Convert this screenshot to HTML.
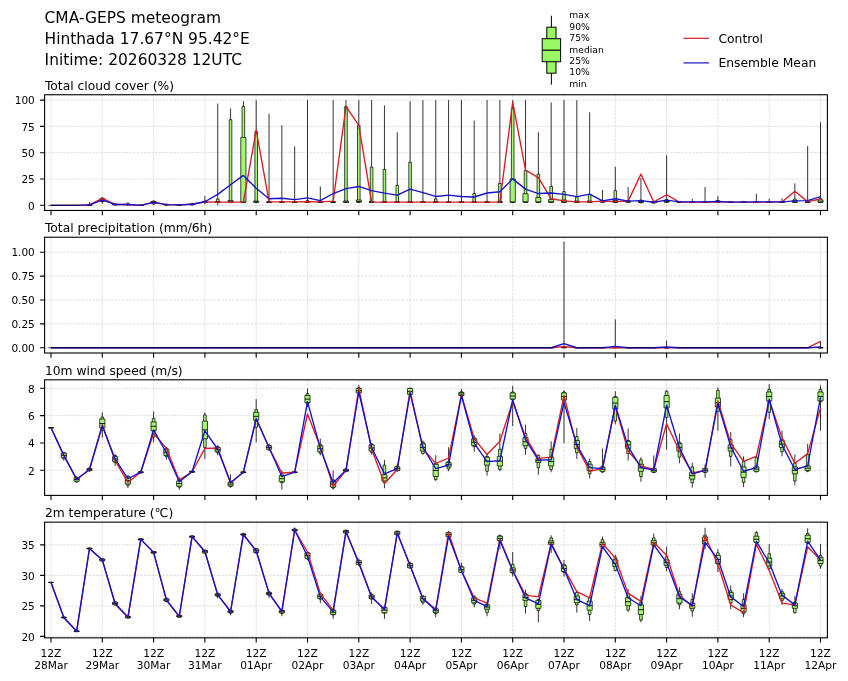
<!DOCTYPE html>
<html lang="en"><head><meta charset="utf-8"><title>CMA-GEPS meteogram</title>
<style>html,body{margin:0;padding:0;background:#fff}svg{display:block;will-change:transform}</style></head>
<body>
<svg width="848" height="681" viewBox="0 0 848 681" font-family="'DejaVu Sans','Liberation Sans',sans-serif" fill="#000">
<rect width="848" height="681" fill="#fff"/>
<text x="44.6" y="22.80" font-size="15.44">CMA-GEPS meteogram</text>
<text x="44.6" y="43.65" font-size="15.44">Hinthada 17.67°N 95.42°E</text>
<text x="44.6" y="64.50" font-size="15.44">Initime: 20260328 12UTC</text>
<line x1="551.4" x2="551.4" y1="15.7" y2="84.7" stroke="#000" stroke-width="1"/>
<rect x="546.8" y="27.2" width="9.2" height="46.0" fill="#99f962" stroke="#000" stroke-width="1"/>
<rect x="542.2" y="38.7" width="18.4" height="23.0" fill="#99f962" stroke="#000" stroke-width="1"/>
<line x1="542.2" x2="560.6" y1="50.2" y2="50.2" stroke="#000" stroke-width="1.2"/>
<text x="569.3" y="18.30" font-size="9.2">max</text>
<text x="569.3" y="29.70" font-size="9.2">90%</text>
<text x="569.3" y="41.10" font-size="9.2">75%</text>
<text x="569.3" y="52.50" font-size="9.2">median</text>
<text x="569.3" y="63.90" font-size="9.2">25%</text>
<text x="569.3" y="75.30" font-size="9.2">10%</text>
<text x="569.3" y="86.70" font-size="9.2">min</text>
<line x1="683.5" x2="709" y1="38.3" y2="38.3" stroke="#d51e28" stroke-width="1.2"/>
<text x="718.5" y="42.5" font-size="12.3">Control</text>
<line x1="683.5" x2="709" y1="62.9" y2="62.9" stroke="#1612cc" stroke-width="1.2"/>
<text x="718.5" y="67" font-size="12.3">Ensemble Mean</text>
<clipPath id="c_cloud"><rect x="44.6" y="94.75" width="782.8" height="115.69999999999999"/></clipPath>
<text x="44.9" y="89.8" font-size="12.3">Total cloud cover (%)</text>
<path d="M51.00 94.75V210.45M102.30 94.75V210.45M153.60 94.75V210.45M204.90 94.75V210.45M256.20 94.75V210.45M307.50 94.75V210.45M358.80 94.75V210.45M410.10 94.75V210.45M461.40 94.75V210.45M512.70 94.75V210.45M564.00 94.75V210.45M615.30 94.75V210.45M666.60 94.75V210.45M717.90 94.75V210.45M769.20 94.75V210.45M820.50 94.75V210.45M44.6 205.30H827.4M44.6 179.00H827.4M44.6 152.70H827.4M44.6 126.40H827.4M44.6 100.10H827.4" stroke="#cdcdcd" stroke-width="0.62" stroke-dasharray="2.57 1.11" fill="none"/>
<g clip-path="url(#c_cloud)">
<path d="M89.47 205.30V202.14M102.30 203.72V197.30M115.12 205.30V203.62M127.95 205.30V202.14M140.77 205.30V204.25M153.60 204.77V200.46M166.43 205.30V203.41M179.25 205.30V204.25M192.07 205.30V202.67M204.90 204.25V196.04M217.72 205.30V103.57M230.55 203.20V108.52M243.38 203.20V101.15M256.20 203.20V100.10M269.02 202.14V113.78M281.85 202.14V125.35M294.67 202.14V146.39M307.50 202.14V100.10M320.32 202.14V186.36M333.15 202.14V100.10M345.97 202.14V100.10M358.80 202.14V100.10M371.62 202.14V100.10M384.45 202.14V105.36M397.27 202.14V132.29M410.10 202.14V101.15M422.92 202.14V100.10M435.75 202.14V100.10M448.57 202.14V100.10M461.40 202.14V100.10M474.22 202.14V120.51M487.05 202.14V100.10M499.88 202.14V100.10M512.70 203.20V100.10M525.52 202.14V100.10M538.35 203.20V132.29M551.17 202.14V102.41M564.00 202.14V100.10M576.82 202.14V100.10M589.65 202.14V112.30M602.48 202.56V189.94M615.30 202.14V166.80M628.12 202.56V187.00M640.95 203.20V177.95M653.77 203.20V201.09M666.60 202.56V155.22M679.42 202.14V201.09M692.25 202.14V198.78M705.07 202.14V187.00M717.90 202.56V196.15M730.72 202.14V201.62M743.55 202.14V200.88M756.38 202.14V194.04M769.20 202.14V198.78M782.02 202.14V198.25M794.85 202.14V183.42M807.67 202.14V146.07M820.50 202.14V122.30" stroke="#000" stroke-width="0.8" fill="none"/>
<path d="M88.17 204.67h2.6V205.30h-2.6ZM101.00 197.94h2.6V201.72h-2.6ZM113.83 204.04h2.6V204.98h-2.6ZM126.65 204.04h2.6V204.98h-2.6ZM139.47 205.19h2.6V205.30h-2.6ZM152.30 201.09h2.6V204.04h-2.6ZM165.12 204.46h2.6V205.09h-2.6ZM177.95 204.67h2.6V205.30h-2.6ZM190.77 203.83h2.6V204.98h-2.6ZM203.60 201.09h2.6V202.67h-2.6ZM216.42 198.99h2.6V202.14h-2.6ZM229.25 119.67h2.6V202.14h-2.6ZM242.07 106.41h2.6V202.14h-2.6ZM254.90 131.66h2.6V202.14h-2.6ZM267.72 201.99h2.6V202.14h-2.6ZM280.55 201.99h2.6V202.14h-2.6ZM293.37 201.99h2.6V202.14h-2.6ZM306.20 200.57h2.6V202.14h-2.6ZM319.02 201.99h2.6V202.14h-2.6ZM331.85 201.99h2.6V202.14h-2.6ZM344.67 106.41h2.6V202.14h-2.6ZM357.50 125.35h2.6V202.14h-2.6ZM370.32 167.11h2.6V202.14h-2.6ZM383.15 169.53h2.6V202.14h-2.6ZM395.97 185.31h2.6V202.14h-2.6ZM408.80 162.38h2.6V202.14h-2.6ZM421.62 201.72h2.6V202.14h-2.6ZM434.45 198.99h2.6V202.14h-2.6ZM447.27 201.99h2.6V202.14h-2.6ZM460.10 201.99h2.6V202.14h-2.6ZM472.92 193.52h2.6V202.14h-2.6ZM485.75 201.99h2.6V202.14h-2.6ZM498.57 183.42h2.6V202.14h-2.6ZM511.40 108.52h2.6V202.14h-2.6ZM524.23 170.58h2.6V202.14h-2.6ZM537.05 174.16h2.6V202.14h-2.6ZM549.88 186.36h2.6V202.14h-2.6ZM562.70 191.62h2.6V202.14h-2.6ZM575.52 196.99h2.6V202.14h-2.6ZM588.35 194.36h2.6V202.14h-2.6ZM601.18 200.36h2.6V202.35h-2.6ZM614.00 190.57h2.6V202.14h-2.6ZM626.83 200.57h2.6V202.35h-2.6ZM639.65 200.04h2.6V202.88h-2.6ZM652.48 201.51h2.6V202.99h-2.6ZM665.30 199.62h2.6V202.35h-2.6ZM678.12 201.99h2.6V202.14h-2.6ZM690.95 201.99h2.6V202.14h-2.6ZM703.77 201.99h2.6V202.14h-2.6ZM716.60 200.46h2.6V202.35h-2.6ZM729.42 201.99h2.6V202.14h-2.6ZM742.25 201.99h2.6V202.14h-2.6ZM755.08 201.99h2.6V202.14h-2.6ZM767.90 201.99h2.6V202.14h-2.6ZM780.73 201.99h2.6V202.14h-2.6ZM793.55 198.99h2.6V202.14h-2.6ZM806.38 201.99h2.6V202.14h-2.6ZM819.20 198.46h2.6V202.14h-2.6Z" stroke="#000" stroke-width="0.72" fill="#a2f970"/>
<path d="M86.88 204.88h5.2V205.30h-5.2ZM99.70 198.78h5.2V201.09h-5.2ZM112.53 204.25h5.2V204.77h-5.2ZM125.35 204.25h5.2V204.77h-5.2ZM138.17 205.30h5.2V205.30h-5.2ZM151.00 201.51h5.2V203.20h-5.2ZM163.83 204.56h5.2V204.88h-5.2ZM176.65 204.77h5.2V205.09h-5.2ZM189.47 204.04h5.2V204.67h-5.2ZM202.30 201.62h5.2V202.14h-5.2ZM215.12 201.83h5.2V202.14h-5.2ZM227.95 200.57h5.2V202.14h-5.2ZM240.78 137.55h5.2V202.14h-5.2ZM253.60 201.09h5.2V202.14h-5.2ZM266.42 202.04h5.2V202.14h-5.2ZM279.25 202.04h5.2V202.14h-5.2ZM292.07 202.04h5.2V202.14h-5.2ZM304.90 201.51h5.2V202.14h-5.2ZM317.72 202.04h5.2V202.14h-5.2ZM330.55 202.04h5.2V202.14h-5.2ZM343.37 201.09h5.2V202.14h-5.2ZM356.20 200.04h5.2V201.62h-5.2ZM369.02 202.04h5.2V202.14h-5.2ZM381.85 202.04h5.2V202.14h-5.2ZM394.67 202.04h5.2V202.14h-5.2ZM407.50 202.04h5.2V202.14h-5.2ZM420.32 202.04h5.2V202.14h-5.2ZM433.15 202.04h5.2V202.14h-5.2ZM445.97 202.04h5.2V202.14h-5.2ZM458.80 202.04h5.2V202.14h-5.2ZM471.62 202.04h5.2V202.14h-5.2ZM484.45 202.04h5.2V202.14h-5.2ZM497.27 202.04h5.2V202.14h-5.2ZM510.10 179.00h5.2V202.14h-5.2ZM522.92 193.73h5.2V201.93h-5.2ZM535.75 197.52h5.2V202.14h-5.2ZM548.57 199.62h5.2V202.14h-5.2ZM561.40 200.04h5.2V202.14h-5.2ZM574.22 201.09h5.2V202.14h-5.2ZM587.05 201.09h5.2V202.14h-5.2ZM599.88 200.78h5.2V202.14h-5.2ZM612.70 200.57h5.2V202.14h-5.2ZM625.52 200.99h5.2V202.14h-5.2ZM638.35 200.67h5.2V202.56h-5.2ZM651.17 201.83h5.2V202.78h-5.2ZM664.00 200.46h5.2V202.14h-5.2ZM676.82 202.04h5.2V202.14h-5.2ZM689.65 202.04h5.2V202.14h-5.2ZM702.47 202.04h5.2V202.14h-5.2ZM715.30 201.09h5.2V202.14h-5.2ZM728.12 202.04h5.2V202.14h-5.2ZM740.95 202.04h5.2V202.14h-5.2ZM753.77 202.04h5.2V202.14h-5.2ZM766.60 202.04h5.2V202.14h-5.2ZM779.42 202.04h5.2V202.14h-5.2ZM792.25 200.57h5.2V202.14h-5.2ZM805.07 202.04h5.2V202.14h-5.2ZM817.90 200.04h5.2V202.14h-5.2Z" stroke="#000" stroke-width="0.72" fill="#a2f970"/>
<path d="M86.88 205.09h5.2M99.70 200.04h5.2M112.53 204.46h5.2M125.35 204.46h5.2M138.17 205.30h5.2M151.00 202.14h5.2M163.83 204.67h5.2M176.65 204.88h5.2M189.47 204.25h5.2M202.30 201.93h5.2M215.12 202.12h5.2M227.95 202.12h5.2M240.78 202.12h5.2M253.60 202.12h5.2M266.42 202.12h5.2M279.25 202.12h5.2M292.07 202.12h5.2M304.90 202.12h5.2M317.72 202.12h5.2M330.55 202.12h5.2M343.37 202.12h5.2M356.20 202.12h5.2M369.02 202.12h5.2M381.85 202.12h5.2M394.67 202.12h5.2M407.50 202.12h5.2M420.32 202.12h5.2M433.15 202.12h5.2M445.97 202.12h5.2M458.80 202.12h5.2M471.62 202.12h5.2M484.45 202.12h5.2M497.27 202.12h5.2M510.10 202.12h5.2M522.92 202.12h5.2M535.75 202.12h5.2M548.57 202.12h5.2M561.40 202.12h5.2M574.22 202.12h5.2M587.05 202.12h5.2M599.88 201.51h5.2M612.70 202.12h5.2M625.52 201.62h5.2M638.35 201.62h5.2M651.17 202.25h5.2M664.00 201.30h5.2M676.82 202.12h5.2M689.65 202.12h5.2M702.47 202.12h5.2M715.30 201.62h5.2M728.12 202.12h5.2M740.95 202.12h5.2M753.77 202.12h5.2M766.60 202.12h5.2M779.42 202.12h5.2M792.25 202.12h5.2M805.07 202.12h5.2M817.90 202.12h5.2" stroke="#000" stroke-width="0.9" fill="none"/>
<polyline points="51.00,205.30 63.83,205.30 76.65,205.30 89.47,204.88 102.30,198.46 115.12,204.46 127.95,204.46 140.77,205.30 153.60,202.14 166.43,204.67 179.25,204.88 192.07,204.25 204.90,201.83 217.72,202.14 230.55,202.14 243.38,202.14 256.20,130.19 269.02,201.72 281.85,201.83 294.67,201.83 307.50,201.62 320.32,201.83 333.15,201.09 345.97,106.41 358.80,125.35 371.62,202.14 384.45,202.14 397.27,202.14 410.10,202.14 422.92,202.14 435.75,202.14 448.57,202.14 461.40,202.14 474.22,202.14 487.05,202.14 499.88,202.14 512.70,102.20 525.52,170.06 538.35,177.63 551.17,198.78 564.00,200.88 576.82,201.93 589.65,201.93 602.48,201.09 615.30,201.62 628.12,201.09 640.95,174.16 653.77,201.93 666.60,194.78 679.42,202.14 692.25,202.14 705.07,202.14 717.90,201.83 730.72,202.14 743.55,202.14 756.38,202.14 769.20,202.14 782.02,201.93 794.85,191.20 807.67,201.62 820.50,198.99" stroke="#d51e28" stroke-width="1.35" fill="none" stroke-linejoin="round"/>
<polyline points="51.00,205.30 63.83,205.30 76.65,205.30 89.47,204.88 102.30,200.04 115.12,204.46 127.95,204.46 140.77,205.30 153.60,202.35 166.43,204.67 179.25,204.88 192.07,204.25 204.90,201.72 217.72,194.36 230.55,184.68 243.38,175.42 256.20,188.15 269.02,198.78 281.85,198.25 294.67,199.62 307.50,197.94 320.32,200.57 333.15,193.52 345.97,188.68 358.80,186.47 371.62,190.57 384.45,193.10 397.27,195.20 410.10,189.10 422.92,192.68 435.75,196.46 448.57,195.20 461.40,196.46 474.22,196.99 487.05,192.99 499.88,191.73 512.70,178.89 525.52,189.10 538.35,193.52 551.17,192.99 564.00,194.36 576.82,196.67 589.65,194.04 602.48,200.88 615.30,198.78 628.12,201.09 640.95,200.57 653.77,202.25 666.60,200.15 679.42,201.83 692.25,201.93 705.07,201.93 717.90,201.41 730.72,202.14 743.55,202.14 756.38,201.93 769.20,201.93 782.02,201.93 794.85,200.88 807.67,200.57 820.50,196.57" stroke="#1612cc" stroke-width="1.35" fill="none" stroke-linejoin="round"/>
<path d="M48.40 205.30H79.25" stroke="#000" stroke-width="0.7" fill="none"/>
</g>
<rect x="44.6" y="94.75" width="782.8" height="115.69999999999999" fill="none" stroke="#000" stroke-width="1.1"/>
<text x="34.8" y="209.50" font-size="10.5" text-anchor="end">0</text>
<text x="34.8" y="183.20" font-size="10.5" text-anchor="end">25</text>
<text x="34.8" y="156.90" font-size="10.5" text-anchor="end">50</text>
<text x="34.8" y="130.60" font-size="10.5" text-anchor="end">75</text>
<text x="34.8" y="104.30" font-size="10.5" text-anchor="end">100</text>
<path d="M51.00 210.45v4.7M102.30 210.45v4.7M153.60 210.45v4.7M204.90 210.45v4.7M256.20 210.45v4.7M307.50 210.45v4.7M358.80 210.45v4.7M410.10 210.45v4.7M461.40 210.45v4.7M512.70 210.45v4.7M564.00 210.45v4.7M615.30 210.45v4.7M666.60 210.45v4.7M717.90 210.45v4.7M769.20 210.45v4.7M820.50 210.45v4.7M44.6 205.30h-4.5M44.6 179.00h-4.5M44.6 152.70h-4.5M44.6 126.40h-4.5M44.6 100.10h-4.5" stroke="#000" stroke-width="1.1" fill="none"/>
<clipPath id="c_precip"><rect x="44.6" y="237.22" width="782.8" height="115.78"/></clipPath>
<text x="44.9" y="232.2" font-size="12.3">Total precipitation (mm/6h)</text>
<path d="M51.00 237.22V353.0M102.30 237.22V353.0M153.60 237.22V353.0M204.90 237.22V353.0M256.20 237.22V353.0M307.50 237.22V353.0M358.80 237.22V353.0M410.10 237.22V353.0M461.40 237.22V353.0M512.70 237.22V353.0M564.00 237.22V353.0M615.30 237.22V353.0M666.60 237.22V353.0M717.90 237.22V353.0M769.20 237.22V353.0M820.50 237.22V353.0M44.6 347.76H827.4M44.6 323.87H827.4M44.6 299.98H827.4M44.6 276.09H827.4M44.6 252.20H827.4" stroke="#cdcdcd" stroke-width="0.62" stroke-dasharray="2.57 1.11" fill="none"/>
<g clip-path="url(#c_precip)">
<path d="M564.00 347.76V241.69M615.30 347.76V319.38M666.60 347.76V340.59M820.50 347.76V341.36" stroke="#000" stroke-width="0.8" fill="none"/>
<path d="M562.70 346.61h2.6V347.76h-2.6ZM614.00 346.61h2.6V347.76h-2.6ZM665.30 347.76h2.6V347.76h-2.6ZM819.20 347.57h2.6V347.76h-2.6Z" stroke="#000" stroke-width="0.72" fill="#a2f970"/>
<path d="M561.40 347.00h5.2V347.76h-5.2ZM612.70 347.09h5.2V347.76h-5.2ZM664.00 347.76h5.2V347.76h-5.2ZM817.90 347.76h5.2V347.76h-5.2Z" stroke="#000" stroke-width="0.72" fill="#a2f970"/>
<path d="M561.40 347.38h5.2M612.70 347.47h5.2M664.00 347.76h5.2M817.90 347.76h5.2" stroke="#000" stroke-width="0.9" fill="none"/>
<polyline points="51.00,347.76 63.83,347.76 76.65,347.76 89.47,347.76 102.30,347.76 115.12,347.76 127.95,347.76 140.77,347.76 153.60,347.76 166.43,347.76 179.25,347.76 192.07,347.76 204.90,347.76 217.72,347.76 230.55,347.76 243.38,347.76 256.20,347.76 269.02,347.76 281.85,347.76 294.67,347.76 307.50,347.76 320.32,347.76 333.15,347.76 345.97,347.76 358.80,347.76 371.62,347.76 384.45,347.76 397.27,347.76 410.10,347.76 422.92,347.76 435.75,347.76 448.57,347.76 461.40,347.76 474.22,347.76 487.05,347.76 499.88,347.76 512.70,347.76 525.52,347.76 538.35,347.76 551.17,347.76 564.00,346.61 576.82,347.76 589.65,347.76 602.48,347.76 615.30,347.76 628.12,347.76 640.95,347.76 653.77,347.76 666.60,347.76 679.42,347.76 692.25,347.76 705.07,347.76 717.90,347.76 730.72,347.76 743.55,347.76 756.38,347.76 769.20,347.76 782.02,347.76 794.85,347.76 807.67,347.76 820.50,341.36" stroke="#d51e28" stroke-width="1.35" fill="none" stroke-linejoin="round"/>
<polyline points="51.00,347.76 63.83,347.76 76.65,347.76 89.47,347.76 102.30,347.76 115.12,347.76 127.95,347.76 140.77,347.76 153.60,347.76 166.43,347.76 179.25,347.76 192.07,347.76 204.90,347.76 217.72,347.76 230.55,347.76 243.38,347.76 256.20,347.76 269.02,347.76 281.85,347.76 294.67,347.76 307.50,347.76 320.32,347.76 333.15,347.76 345.97,347.76 358.80,347.76 371.62,347.76 384.45,347.76 397.27,347.76 410.10,347.76 422.92,347.76 435.75,347.76 448.57,347.76 461.40,347.76 474.22,347.76 487.05,347.76 499.88,347.76 512.70,347.76 525.52,347.76 538.35,347.76 551.17,347.76 564.00,343.65 576.82,347.76 589.65,347.76 602.48,347.76 615.30,346.33 628.12,347.76 640.95,347.76 653.77,347.76 666.60,347.00 679.42,347.76 692.25,347.76 705.07,347.76 717.90,347.76 730.72,347.76 743.55,347.76 756.38,347.76 769.20,347.76 782.02,347.76 794.85,347.76 807.67,347.76 820.50,347.00" stroke="#1612cc" stroke-width="1.35" fill="none" stroke-linejoin="round"/>
<path d="M48.40 347.76H553.77M574.22 347.76H605.08M625.52 347.76H656.38M676.82 347.76H810.27" stroke="#000" stroke-width="0.7" fill="none"/>
</g>
<rect x="44.6" y="237.22" width="782.8" height="115.78" fill="none" stroke="#000" stroke-width="1.1"/>
<text x="34.8" y="351.96" font-size="10.5" text-anchor="end">0.00</text>
<text x="34.8" y="328.07" font-size="10.5" text-anchor="end">0.25</text>
<text x="34.8" y="304.18" font-size="10.5" text-anchor="end">0.50</text>
<text x="34.8" y="280.29" font-size="10.5" text-anchor="end">0.75</text>
<text x="34.8" y="256.40" font-size="10.5" text-anchor="end">1.00</text>
<path d="M51.00 353.0v4.7M102.30 353.0v4.7M153.60 353.0v4.7M204.90 353.0v4.7M256.20 353.0v4.7M307.50 353.0v4.7M358.80 353.0v4.7M410.10 353.0v4.7M461.40 353.0v4.7M512.70 353.0v4.7M564.00 353.0v4.7M615.30 353.0v4.7M666.60 353.0v4.7M717.90 353.0v4.7M769.20 353.0v4.7M820.50 353.0v4.7M44.6 347.76h-4.5M44.6 323.87h-4.5M44.6 299.98h-4.5M44.6 276.09h-4.5M44.6 252.20h-4.5" stroke="#000" stroke-width="1.1" fill="none"/>
<clipPath id="c_wind"><rect x="44.6" y="379.8" width="782.8" height="115.58999999999997"/></clipPath>
<text x="44.9" y="374.8" font-size="12.3">10m wind speed (m/s)</text>
<path d="M51.00 379.8V495.39M102.30 379.8V495.39M153.60 379.8V495.39M204.90 379.8V495.39M256.20 379.8V495.39M307.50 379.8V495.39M358.80 379.8V495.39M410.10 379.8V495.39M461.40 379.8V495.39M512.70 379.8V495.39M564.00 379.8V495.39M615.30 379.8V495.39M666.60 379.8V495.39M717.90 379.8V495.39M769.20 379.8V495.39M820.50 379.8V495.39M44.6 470.30H827.4M44.6 442.97H827.4M44.6 415.63H827.4M44.6 388.30H827.4" stroke="#cdcdcd" stroke-width="0.62" stroke-dasharray="2.57 1.11" fill="none"/>
<g clip-path="url(#c_wind)">
<path d="M51.00 427.80V427.80M63.83 460.73V451.85M76.65 482.60V476.45M89.47 471.67V466.88M102.30 437.77V412.35M115.12 465.93V454.17M127.95 488.07V475.49M140.77 473.72V470.57M153.60 442.28V411.53M166.43 459.78V446.66M179.25 489.71V477.41M192.07 473.03V470.30M204.90 458.96V412.35M217.72 455.40V444.88M230.55 487.66V474.26M243.38 473.31V470.98M256.20 442.28V399.10M269.02 451.17V443.65M281.85 489.71V470.30M294.67 473.31V470.98M307.50 407.02V388.57M320.32 455.40V438.73M333.15 489.71V470.30M345.97 472.35V468.25M358.80 393.77V385.02M371.62 454.58V443.10M384.45 488.34V459.78M397.27 471.67V463.47M410.10 395.13V387.62M422.92 454.58V440.51M435.75 480.96V455.13M448.57 471.26V447.20M461.40 396.09V389.12M474.22 451.85V435.18M487.05 475.63V452.81M499.88 471.26V433.40M512.70 426.02V385.84M525.52 454.58V424.65M538.35 474.81V454.58M551.17 472.21V441.33M564.00 443.10V390.21M576.82 458.96V428.07M589.65 478.36V458.41M602.48 473.03V448.43M615.30 424.24V391.17M628.12 460.73V428.48M640.95 481.78V457.18M653.77 473.03V455.40M666.60 449.66V390.21M679.42 463.33V433.40M692.25 487.66V462.78M705.07 477.82V464.56M717.90 430.80V387.34M730.72 466.47V432.03M743.55 487.11V456.36M756.38 472.21V455.95M769.20 419.32V384.20M782.02 456.36V430.80M794.85 485.33V454.58M807.67 472.21V443.92M820.50 430.80V385.57" stroke="#000" stroke-width="0.8" fill="none"/>
<path d="M49.70 427.80h2.6V427.80h-2.6ZM62.53 452.53h2.6V458.68h-2.6ZM75.35 477.13h2.6V482.05h-2.6ZM88.17 467.98h2.6V470.98h-2.6ZM101.00 417.00h2.6V429.98h-2.6ZM113.83 455.54h2.6V462.65h-2.6ZM126.65 476.04h2.6V485.33h-2.6ZM139.47 471.39h2.6V473.03h-2.6ZM152.30 418.37h2.6V436.95h-2.6ZM165.12 448.16h2.6V456.63h-2.6ZM177.95 479.18h2.6V487.11h-2.6ZM190.77 471.12h2.6V472.49h-2.6ZM203.60 414.95h2.6V447.48h-2.6ZM216.42 446.66h2.6V452.81h-2.6ZM229.25 481.23h2.6V486.70h-2.6ZM242.07 471.67h2.6V472.76h-2.6ZM254.90 409.62h2.6V427.25h-2.6ZM267.72 445.02h2.6V449.80h-2.6ZM280.55 473.85h2.6V482.60h-2.6ZM293.37 471.67h2.6V472.76h-2.6ZM306.20 393.77h2.6V403.61h-2.6ZM319.02 444.33h2.6V453.22h-2.6ZM331.85 479.87h2.6V488.07h-2.6ZM344.67 468.93h2.6V471.67h-2.6ZM357.50 387.62h2.6V393.36h-2.6ZM370.32 444.06h2.6V452.26h-2.6ZM383.15 465.11h2.6V482.74h-2.6ZM395.97 466.20h2.6V470.85h-2.6ZM408.80 388.30h2.6V394.72h-2.6ZM421.62 442.28h2.6V453.63h-2.6ZM434.45 463.33h2.6V479.59h-2.6ZM447.27 461.55h2.6V468.93h-2.6ZM460.10 391.72h2.6V395.82h-2.6ZM472.92 437.77h2.6V446.66h-2.6ZM485.75 456.36h2.6V471.26h-2.6ZM498.57 449.25h2.6V469.48h-2.6ZM511.40 391.99h2.6V399.92h-2.6ZM524.23 433.40h2.6V448.43h-2.6ZM537.05 455.40h2.6V467.70h-2.6ZM549.88 449.25h2.6V469.48h-2.6ZM562.70 391.99h2.6V400.87h-2.6ZM575.52 436.54h2.6V452.81h-2.6ZM588.35 461.55h2.6V473.85h-2.6ZM601.18 466.20h2.6V472.08h-2.6ZM614.00 396.50h2.6V421.10h-2.6ZM626.83 440.51h2.6V453.63h-2.6ZM639.65 459.78h2.6V476.59h-2.6ZM652.48 467.98h2.6V472.49h-2.6ZM665.30 391.17h2.6V417.55h-2.6ZM678.12 442.28h2.6V457.18h-2.6ZM690.95 466.88h2.6V482.74h-2.6ZM703.77 468.11h2.6V472.49h-2.6ZM716.60 390.35h2.6V411.40h-2.6ZM729.42 439.55h2.6V456.36h-2.6ZM742.25 461.55h2.6V482.33h-2.6ZM755.08 457.18h2.6V471.94h-2.6ZM767.90 389.39h2.6V412.35h-2.6ZM780.73 439.55h2.6V451.85h-2.6ZM793.55 463.33h2.6V480.96h-2.6ZM806.38 454.58h2.6V471.26h-2.6ZM819.20 389.39h2.6V401.69h-2.6Z" stroke="#000" stroke-width="0.72" fill="#a2f970"/>
<path d="M48.40 427.80h5.2V427.80h-5.2ZM61.23 453.08h5.2V457.73h-5.2ZM74.05 477.68h5.2V481.23h-5.2ZM86.88 468.66h5.2V470.30h-5.2ZM99.70 419.05h5.2V427.93h-5.2ZM112.53 456.63h5.2V461.28h-5.2ZM125.35 477.13h5.2V483.97h-5.2ZM138.17 471.80h5.2V472.62h-5.2ZM151.00 421.92h5.2V430.67h-5.2ZM163.83 449.25h5.2V455.40h-5.2ZM176.65 480.96h5.2V486.29h-5.2ZM189.47 471.39h5.2V472.21h-5.2ZM202.30 421.10h5.2V438.73h-5.2ZM215.12 447.48h5.2V451.85h-5.2ZM227.95 482.33h5.2V485.88h-5.2ZM240.78 471.94h5.2V472.49h-5.2ZM253.60 412.35h5.2V420.28h-5.2ZM266.42 445.70h5.2V449.25h-5.2ZM279.25 475.63h5.2V481.78h-5.2ZM292.07 471.94h5.2V472.49h-5.2ZM304.90 395.54h5.2V402.65h-5.2ZM317.72 445.70h5.2V451.85h-5.2ZM330.55 480.96h5.2V487.11h-5.2ZM343.37 469.34h5.2V471.26h-5.2ZM356.20 388.57h5.2V392.95h-5.2ZM369.02 444.88h5.2V451.03h-5.2ZM381.85 474.81h5.2V480.96h-5.2ZM394.67 466.88h5.2V470.44h-5.2ZM407.50 388.57h5.2V394.31h-5.2ZM420.32 443.92h5.2V451.03h-5.2ZM433.15 464.29h5.2V476.59h-5.2ZM445.97 462.51h5.2V466.88h-5.2ZM458.80 392.54h5.2V395.54h-5.2ZM471.62 438.73h5.2V445.70h-5.2ZM484.45 457.18h5.2V465.11h-5.2ZM497.27 456.36h5.2V465.93h-5.2ZM510.10 392.95h5.2V399.10h-5.2ZM522.92 437.77h5.2V445.70h-5.2ZM535.75 458.96h5.2V462.51h-5.2ZM548.57 457.18h5.2V465.93h-5.2ZM561.40 392.95h5.2V399.92h-5.2ZM574.22 440.51h5.2V448.43h-5.2ZM587.05 464.29h5.2V470.44h-5.2ZM599.88 467.16h5.2V471.26h-5.2ZM612.70 397.32h5.2V408.80h-5.2ZM625.52 441.33h5.2V448.43h-5.2ZM638.35 464.29h5.2V471.26h-5.2ZM651.17 468.66h5.2V471.94h-5.2ZM664.00 395.54h5.2V407.84h-5.2ZM676.82 443.65h5.2V451.03h-5.2ZM689.65 472.21h5.2V479.18h-5.2ZM702.47 468.66h5.2V471.94h-5.2ZM715.30 398.14h5.2V407.02h-5.2ZM728.12 444.88h5.2V451.03h-5.2ZM740.95 466.88h5.2V477.41h-5.2ZM753.77 466.88h5.2V471.26h-5.2ZM766.60 391.99h5.2V400.87h-5.2ZM779.42 440.78h5.2V447.48h-5.2ZM792.25 466.88h5.2V473.85h-5.2ZM805.07 465.93h5.2V470.44h-5.2ZM817.90 391.99h5.2V400.87h-5.2Z" stroke="#000" stroke-width="0.72" fill="#a2f970"/>
<path d="M48.40 427.80h5.2M61.23 455.40h5.2M74.05 479.46h5.2M86.88 469.48h5.2M99.70 423.49h5.2M112.53 458.96h5.2M125.35 480.55h5.2M138.17 472.21h5.2M151.00 426.29h5.2M163.83 452.33h5.2M176.65 483.62h5.2M189.47 471.80h5.2M202.30 429.92h5.2M215.12 449.66h5.2M227.95 484.10h5.2M240.78 472.21h5.2M253.60 416.32h5.2M266.42 447.48h5.2M279.25 478.70h5.2M292.07 472.21h5.2M304.90 399.10h5.2M317.72 448.78h5.2M330.55 484.04h5.2M343.37 470.30h5.2M356.20 390.76h5.2M369.02 447.96h5.2M381.85 477.88h5.2M394.67 468.66h5.2M407.50 391.44h5.2M420.32 447.48h5.2M433.15 470.44h5.2M445.97 464.70h5.2M458.80 394.04h5.2M471.62 442.22h5.2M484.45 461.14h5.2M497.27 461.14h5.2M510.10 396.02h5.2M522.92 441.74h5.2M535.75 460.73h5.2M548.57 461.55h5.2M561.40 396.43h5.2M574.22 444.47h5.2M587.05 467.36h5.2M599.88 469.21h5.2M612.70 403.06h5.2M625.52 444.88h5.2M638.35 467.77h5.2M651.17 470.30h5.2M664.00 401.69h5.2M676.82 447.34h5.2M689.65 475.70h5.2M702.47 470.30h5.2M715.30 402.58h5.2M728.12 447.96h5.2M740.95 472.15h5.2M753.77 469.07h5.2M766.60 396.43h5.2M779.42 444.13h5.2M792.25 470.37h5.2M805.07 468.18h5.2M817.90 396.43h5.2" stroke="#000" stroke-width="0.9" fill="none"/>
<polyline points="51.00,427.80 63.83,455.40 76.65,479.46 89.47,469.48 102.30,424.65 115.12,460.73 127.95,482.33 140.77,472.21 153.60,433.40 166.43,448.43 179.25,480.14 192.07,471.80 204.90,448.43 217.72,448.02 230.55,482.74 243.38,472.21 256.20,419.32 269.02,447.48 281.85,473.03 294.67,472.21 307.50,413.99 320.32,446.66 333.15,486.29 345.97,470.30 358.80,388.57 371.62,449.25 384.45,483.56 397.27,469.48 410.10,391.17 422.92,448.43 435.75,463.33 448.57,458.00 461.40,394.72 474.22,438.73 487.05,454.58 499.88,441.33 512.70,401.69 525.52,436.95 538.35,458.41 551.17,457.18 564.00,395.54 576.82,446.66 589.65,471.26 602.48,468.66 615.30,406.07 628.12,451.03 640.95,465.93 653.77,469.48 666.60,423.70 679.42,451.03 692.25,473.03 705.07,470.30 717.90,400.87 730.72,443.10 743.55,461.28 756.38,456.36 769.20,399.92 782.02,437.77 794.85,463.33 807.67,453.63 820.50,407.84" stroke="#d51e28" stroke-width="1.35" fill="none" stroke-linejoin="round"/>
<polyline points="51.00,427.80 63.83,455.40 76.65,479.18 89.47,469.48 102.30,426.02 115.12,458.96 127.95,478.77 140.77,472.21 153.60,429.85 166.43,452.81 179.25,481.78 192.07,471.80 204.90,430.80 217.72,449.25 230.55,482.74 243.38,472.21 256.20,418.50 269.02,447.48 281.85,476.59 294.67,472.21 307.50,401.69 320.32,448.43 333.15,482.74 345.97,470.30 358.80,391.99 371.62,447.48 384.45,473.85 397.27,468.66 410.10,392.95 422.92,447.48 435.75,468.66 448.57,465.11 461.40,395.54 474.22,443.10 487.05,461.55 499.88,460.73 512.70,399.92 525.52,439.55 538.35,460.19 551.17,459.78 564.00,402.65 576.82,444.88 589.65,467.70 602.48,468.66 615.30,405.25 628.12,446.66 640.95,467.70 653.77,470.03 666.60,405.25 679.42,447.48 692.25,473.85 705.07,470.30 717.90,403.47 730.72,446.66 743.55,471.26 756.38,467.70 769.20,399.10 782.02,444.88 794.85,469.48 807.67,465.93 820.50,397.32" stroke="#1612cc" stroke-width="1.35" fill="none" stroke-linejoin="round"/>
</g>
<rect x="44.6" y="379.8" width="782.8" height="115.58999999999997" fill="none" stroke="#000" stroke-width="1.1"/>
<text x="34.8" y="474.50" font-size="10.5" text-anchor="end">2</text>
<text x="34.8" y="447.17" font-size="10.5" text-anchor="end">4</text>
<text x="34.8" y="419.83" font-size="10.5" text-anchor="end">6</text>
<text x="34.8" y="392.50" font-size="10.5" text-anchor="end">8</text>
<path d="M51.00 495.39v4.7M102.30 495.39v4.7M153.60 495.39v4.7M204.90 495.39v4.7M256.20 495.39v4.7M307.50 495.39v4.7M358.80 495.39v4.7M410.10 495.39v4.7M461.40 495.39v4.7M512.70 495.39v4.7M564.00 495.39v4.7M615.30 495.39v4.7M666.60 495.39v4.7M717.90 495.39v4.7M769.20 495.39v4.7M820.50 495.39v4.7M44.6 470.30h-4.5M44.6 442.97h-4.5M44.6 415.63h-4.5M44.6 388.30h-4.5" stroke="#000" stroke-width="1.1" fill="none"/>
<clipPath id="c_temp"><rect x="44.6" y="522.16" width="782.8" height="115.70000000000005"/></clipPath>
<text x="44.9" y="517.2" font-size="12.3">2m temperature (℃)</text>
<path d="M51.00 522.16V637.86M102.30 522.16V637.86M153.60 522.16V637.86M204.90 522.16V637.86M256.20 522.16V637.86M307.50 522.16V637.86M358.80 522.16V637.86M410.10 522.16V637.86M461.40 522.16V637.86M512.70 522.16V637.86M564.00 522.16V637.86M615.30 522.16V637.86M666.60 522.16V637.86M717.90 522.16V637.86M769.20 522.16V637.86M820.50 522.16V637.86M44.6 636.40H827.4M44.6 605.88H827.4M44.6 575.37H827.4M44.6 544.85H827.4" stroke="#cdcdcd" stroke-width="0.62" stroke-dasharray="2.57 1.11" fill="none"/>
<g clip-path="url(#c_temp)">
<path d="M51.00 582.45V582.45M63.83 618.07V616.89M76.65 631.80V630.63M89.47 549.10V547.93M102.30 561.39V558.46M115.12 605.27V601.31M127.95 618.29V615.94M140.77 540.14V538.58M153.60 553.53V551.19M166.43 602.22V597.34M179.25 617.43V615.09M192.07 537.65V535.70M204.90 553.64V549.73M217.72 598.56V592.46M230.55 615.34V609.24M243.38 536.31V532.64M256.20 554.00V547.90M269.02 597.95V590.62M281.85 616.26V608.93M294.67 532.03V527.46M307.50 560.11V551.26M320.32 603.14V592.46M333.15 618.88V608.32M345.97 533.56V529.59M358.80 566.21V558.28M371.62 604.05V592.46M384.45 618.88V605.70M397.27 535.39V530.81M410.10 568.65V561.63M422.92 604.85V595.14M435.75 617.17V607.41M448.57 537.22V530.81M461.40 573.11V562.55M474.22 607.41V595.14M487.05 616.26V603.08M499.88 549.37V534.47M512.70 576.59V551.99M525.52 613.63V589.83M538.35 622.36V598.68M551.17 552.91V535.27M564.00 576.59V559.93M576.82 612.72V590.75M589.65 621.02V596.00M602.48 548.51V536.55M615.30 571.40V554.62M628.12 611.86V588.98M640.95 622.36V596.00M653.77 546.74V533.50M666.60 571.40V546.74M679.42 609.24V587.21M692.25 616.81V593.37M705.07 549.37V527.76M717.90 572.32V549.37M730.72 609.24V585.44M743.55 617.11V593.37M756.38 543.20V530.87M769.20 569.63V544.12M782.02 604.85V588.98M794.85 613.63V596.00M807.67 544.12V528.25M820.50 568.71V544.12" stroke="#000" stroke-width="0.8" fill="none"/>
<path d="M49.70 582.45h2.6V582.45h-2.6ZM62.53 617.00h2.6V617.96h-2.6ZM75.35 630.74h2.6V631.69h-2.6ZM88.17 548.04h2.6V548.99h-2.6ZM101.00 558.74h2.6V561.12h-2.6ZM113.83 601.92h2.6V604.97h-2.6ZM126.65 616.16h2.6V618.07h-2.6ZM139.47 538.72h2.6V539.99h-2.6ZM152.30 551.40h2.6V553.31h-2.6ZM165.12 598.25h2.6V601.61h-2.6ZM177.95 615.31h2.6V617.21h-2.6ZM190.77 535.88h2.6V537.46h-2.6ZM203.60 550.10h2.6V553.27h-2.6ZM216.42 593.37h2.6V596.42h-2.6ZM229.25 610.16h2.6V613.21h-2.6ZM242.07 533.68h2.6V535.27h-2.6ZM254.90 548.51h2.6V553.09h-2.6ZM267.72 591.85h2.6V595.20h-2.6ZM280.55 609.85h2.6V613.51h-2.6ZM293.37 528.98h2.6V531.12h-2.6ZM306.20 552.48h2.6V558.89h-2.6ZM319.02 593.98h2.6V599.17h-2.6ZM331.85 609.55h2.6V615.04h-2.6ZM344.67 530.20h2.6V533.25h-2.6ZM357.50 560.41h2.6V564.69h-2.6ZM370.32 594.59h2.6V599.17h-2.6ZM383.15 607.10h2.6V613.21h-2.6ZM395.97 531.12h2.6V535.08h-2.6ZM408.80 563.16h2.6V568.04h-2.6ZM421.62 596.00h2.6V602.71h-2.6ZM434.45 608.32h2.6V613.51h-2.6ZM447.27 532.34h2.6V536.92h-2.6ZM460.10 566.21h2.6V572.62h-2.6ZM472.92 596.73h2.6V604.05h-2.6ZM485.75 604.05h2.6V612.72h-2.6ZM498.57 535.70h2.6V541.19h-2.6ZM511.40 564.38h2.6V573.11h-2.6ZM524.23 593.37h2.6V606.55h-2.6ZM537.05 599.54h2.6V610.46h-2.6ZM549.88 537.95h2.6V544.97h-2.6ZM562.70 564.38h2.6V572.32h-2.6ZM575.52 592.46h2.6V604.85h-2.6ZM588.35 597.77h2.6V614.49h-2.6ZM601.18 539.66h2.6V547.60h-2.6ZM614.00 557.30h2.6V570.48h-2.6ZM626.83 593.37h2.6V610.09h-2.6ZM639.65 602.22h2.6V620.10h-2.6ZM652.48 537.95h2.6V545.83h-2.6ZM665.30 556.45h2.6V567.49h-2.6ZM678.12 591.60h2.6V604.85h-2.6ZM690.95 599.54h2.6V611.01h-2.6ZM703.77 535.08h2.6V544.85h-2.6ZM716.60 552.91h2.6V564.38h-2.6ZM729.42 590.75h2.6V603.08h-2.6ZM742.25 599.54h2.6V613.63h-2.6ZM755.08 532.64h2.6V542.84h-2.6ZM767.90 553.76h2.6V568.71h-2.6ZM780.73 591.60h2.6V600.39h-2.6ZM793.55 602.22h2.6V612.72h-2.6ZM806.38 533.50h2.6V543.20h-2.6ZM819.20 555.53h2.6V566.09h-2.6Z" stroke="#000" stroke-width="0.72" fill="#a2f970"/>
<path d="M48.40 582.45h5.2V582.45h-5.2ZM61.23 617.11h5.2V617.85h-5.2ZM74.05 630.85h5.2V631.58h-5.2ZM86.88 548.15h5.2V548.88h-5.2ZM99.70 559.01h5.2V560.84h-5.2ZM112.53 602.22h5.2V604.66h-5.2ZM125.35 616.38h5.2V617.85h-5.2ZM138.17 538.87h5.2V539.85h-5.2ZM151.00 551.62h5.2V553.09h-5.2ZM163.83 598.86h5.2V601.00h-5.2ZM176.65 615.53h5.2V616.99h-5.2ZM189.47 536.06h5.2V537.28h-5.2ZM202.30 550.47h5.2V552.91h-5.2ZM215.12 593.80h5.2V595.81h-5.2ZM227.95 610.64h5.2V612.60h-5.2ZM240.78 533.86h5.2V535.08h-5.2ZM253.60 549.12h5.2V552.48h-5.2ZM266.42 592.46h5.2V594.59h-5.2ZM279.25 610.46h5.2V612.90h-5.2ZM292.07 529.29h5.2V530.81h-5.2ZM304.90 552.91h5.2V558.28h-5.2ZM317.72 594.29h5.2V598.56h-5.2ZM330.55 610.16h5.2V614.43h-5.2ZM343.37 530.51h5.2V532.95h-5.2ZM356.20 560.72h5.2V564.38h-5.2ZM369.02 595.14h5.2V598.56h-5.2ZM381.85 607.47h5.2V612.72h-5.2ZM394.67 531.42h5.2V534.78h-5.2ZM407.50 563.47h5.2V567.74h-5.2ZM420.32 596.42h5.2V601.00h-5.2ZM433.15 608.93h5.2V612.72h-5.2ZM445.97 532.64h5.2V536.55h-5.2ZM458.80 566.94h5.2V572.32h-5.2ZM471.62 597.77h5.2V602.83h-5.2ZM484.45 604.85h5.2V609.24h-5.2ZM497.27 536.18h5.2V540.58h-5.2ZM510.10 567.86h5.2V572.32h-5.2ZM522.92 594.59h5.2V600.39h-5.2ZM535.75 600.39h5.2V608.32h-5.2ZM548.57 540.94h5.2V544.61h-5.2ZM561.40 565.72h5.2V571.40h-5.2ZM574.22 596.00h5.2V602.71h-5.2ZM587.05 601.31h5.2V610.16h-5.2ZM599.88 542.35h5.2V546.74h-5.2ZM612.70 559.93h5.2V566.46h-5.2ZM625.52 597.77h5.2V605.70h-5.2ZM638.35 604.85h5.2V614.49h-5.2ZM651.17 540.58h5.2V544.97h-5.2ZM664.00 559.93h5.2V565.24h-5.2ZM676.82 594.29h5.2V603.08h-5.2ZM689.65 603.08h5.2V608.32h-5.2ZM702.47 537.04h5.2V544.12h-5.2ZM715.30 555.53h5.2V563.47h-5.2ZM728.12 592.46h5.2V599.54h-5.2ZM740.95 604.85h5.2V611.86h-5.2ZM753.77 536.18h5.2V542.35h-5.2ZM766.60 558.16h5.2V566.09h-5.2ZM779.42 593.37h5.2V598.68h-5.2ZM792.25 603.08h5.2V608.32h-5.2ZM805.07 535.27h5.2V542.35h-5.2ZM817.90 557.30h5.2V563.47h-5.2Z" stroke="#000" stroke-width="0.72" fill="#a2f970"/>
<path d="M48.40 582.45h5.2M61.23 617.48h5.2M74.05 631.21h5.2M86.88 548.51h5.2M99.70 559.93h5.2M112.53 603.44h5.2M125.35 617.11h5.2M138.17 539.36h5.2M151.00 552.36h5.2M163.83 599.93h5.2M176.65 616.26h5.2M189.47 536.67h5.2M202.30 551.69h5.2M215.12 594.81h5.2M227.95 611.62h5.2M240.78 534.47h5.2M253.60 550.80h5.2M266.42 593.52h5.2M279.25 611.68h5.2M292.07 530.05h5.2M304.90 555.59h5.2M317.72 596.42h5.2M330.55 612.29h5.2M343.37 531.73h5.2M356.20 562.55h5.2M369.02 596.85h5.2M381.85 610.09h5.2M394.67 533.10h5.2M407.50 565.60h5.2M420.32 598.71h5.2M433.15 610.83h5.2M445.97 534.60h5.2M458.80 569.63h5.2M471.62 600.30h5.2M484.45 607.04h5.2M497.27 538.38h5.2M510.10 570.09h5.2M522.92 597.49h5.2M535.75 604.36h5.2M548.57 542.77h5.2M561.40 568.56h5.2M574.22 599.35h5.2M587.05 605.73h5.2M599.88 544.54h5.2M612.70 563.19h5.2M625.52 601.73h5.2M638.35 609.67h5.2M651.17 542.77h5.2M664.00 562.58h5.2M676.82 598.68h5.2M689.65 605.70h5.2M702.47 540.58h5.2M715.30 559.50h5.2M728.12 596.00h5.2M740.95 608.36h5.2M753.77 539.27h5.2M766.60 562.12h5.2M779.42 596.03h5.2M792.25 605.70h5.2M805.07 538.81h5.2M817.90 560.38h5.2" stroke="#000" stroke-width="0.9" fill="none"/>
<polyline points="51.00,582.45 63.83,617.48 76.65,631.21 89.47,548.51 102.30,559.93 115.12,604.05 127.95,617.48 140.77,539.36 153.60,552.36 166.43,600.39 179.25,616.56 192.07,536.67 204.90,551.26 217.72,594.90 230.55,611.68 243.38,534.47 256.20,550.77 269.02,593.37 281.85,611.38 294.67,530.02 307.50,551.99 320.32,593.37 333.15,610.16 345.97,531.79 358.80,563.16 371.62,597.03 384.45,609.55 397.27,533.01 410.10,565.60 422.92,598.56 435.75,609.24 448.57,532.64 461.40,570.79 474.22,597.77 487.05,603.08 499.88,539.05 512.70,570.48 525.52,595.14 538.35,596.91 551.17,543.20 564.00,568.65 576.82,591.60 589.65,597.77 602.48,543.20 615.30,558.16 628.12,593.37 640.95,601.31 653.77,542.35 666.60,555.53 679.42,595.14 692.25,606.55 705.07,536.18 717.90,564.32 730.72,604.85 743.55,612.72 756.38,544.12 769.20,570.48 782.02,603.08 794.85,604.85 807.67,546.74 820.50,560.11" stroke="#d51e28" stroke-width="1.35" fill="none" stroke-linejoin="round"/>
<polyline points="51.00,582.45 63.83,617.48 76.65,631.21 89.47,548.51 102.30,559.93 115.12,603.44 127.95,617.11 140.77,539.36 153.60,552.36 166.43,599.90 179.25,616.26 192.07,536.67 204.90,551.69 217.72,594.59 230.55,611.50 243.38,534.47 256.20,550.77 269.02,593.37 281.85,611.50 294.67,530.02 307.50,556.45 320.32,596.91 333.15,611.86 345.97,531.79 358.80,562.55 371.62,596.91 384.45,609.55 397.27,533.01 410.10,565.72 422.92,598.68 435.75,610.46 448.57,536.18 461.40,570.48 474.22,600.39 487.05,606.55 499.88,540.58 512.70,570.48 525.52,597.77 538.35,603.93 551.17,544.12 564.00,569.26 576.82,599.54 589.65,605.70 602.48,546.74 615.30,564.32 628.12,597.77 640.95,605.70 653.77,544.97 666.60,562.55 679.42,596.91 692.25,605.33 705.07,542.35 717.90,559.07 730.72,596.91 743.55,606.55 756.38,541.43 769.20,562.55 782.02,595.14 794.85,604.85 807.67,541.43 820.50,559.93" stroke="#1612cc" stroke-width="1.35" fill="none" stroke-linejoin="round"/>
</g>
<rect x="44.6" y="522.16" width="782.8" height="115.70000000000005" fill="none" stroke="#000" stroke-width="1.1"/>
<text x="34.8" y="640.60" font-size="10.5" text-anchor="end">20</text>
<text x="34.8" y="610.08" font-size="10.5" text-anchor="end">25</text>
<text x="34.8" y="579.57" font-size="10.5" text-anchor="end">30</text>
<text x="34.8" y="549.05" font-size="10.5" text-anchor="end">35</text>
<path d="M51.00 637.86v4.7M102.30 637.86v4.7M153.60 637.86v4.7M204.90 637.86v4.7M256.20 637.86v4.7M307.50 637.86v4.7M358.80 637.86v4.7M410.10 637.86v4.7M461.40 637.86v4.7M512.70 637.86v4.7M564.00 637.86v4.7M615.30 637.86v4.7M666.60 637.86v4.7M717.90 637.86v4.7M769.20 637.86v4.7M820.50 637.86v4.7M44.6 636.40h-4.5M44.6 605.88h-4.5M44.6 575.37h-4.5M44.6 544.85h-4.5" stroke="#000" stroke-width="1.1" fill="none"/>
<text x="51.00" y="656.7" font-size="10.65" text-anchor="middle">12Z</text>
<text x="51.00" y="669.0" font-size="10.65" text-anchor="middle">28Mar</text>
<text x="102.30" y="656.7" font-size="10.65" text-anchor="middle">12Z</text>
<text x="102.30" y="669.0" font-size="10.65" text-anchor="middle">29Mar</text>
<text x="153.60" y="656.7" font-size="10.65" text-anchor="middle">12Z</text>
<text x="153.60" y="669.0" font-size="10.65" text-anchor="middle">30Mar</text>
<text x="204.90" y="656.7" font-size="10.65" text-anchor="middle">12Z</text>
<text x="204.90" y="669.0" font-size="10.65" text-anchor="middle">31Mar</text>
<text x="256.20" y="656.7" font-size="10.65" text-anchor="middle">12Z</text>
<text x="256.20" y="669.0" font-size="10.65" text-anchor="middle">01Apr</text>
<text x="307.50" y="656.7" font-size="10.65" text-anchor="middle">12Z</text>
<text x="307.50" y="669.0" font-size="10.65" text-anchor="middle">02Apr</text>
<text x="358.80" y="656.7" font-size="10.65" text-anchor="middle">12Z</text>
<text x="358.80" y="669.0" font-size="10.65" text-anchor="middle">03Apr</text>
<text x="410.10" y="656.7" font-size="10.65" text-anchor="middle">12Z</text>
<text x="410.10" y="669.0" font-size="10.65" text-anchor="middle">04Apr</text>
<text x="461.40" y="656.7" font-size="10.65" text-anchor="middle">12Z</text>
<text x="461.40" y="669.0" font-size="10.65" text-anchor="middle">05Apr</text>
<text x="512.70" y="656.7" font-size="10.65" text-anchor="middle">12Z</text>
<text x="512.70" y="669.0" font-size="10.65" text-anchor="middle">06Apr</text>
<text x="564.00" y="656.7" font-size="10.65" text-anchor="middle">12Z</text>
<text x="564.00" y="669.0" font-size="10.65" text-anchor="middle">07Apr</text>
<text x="615.30" y="656.7" font-size="10.65" text-anchor="middle">12Z</text>
<text x="615.30" y="669.0" font-size="10.65" text-anchor="middle">08Apr</text>
<text x="666.60" y="656.7" font-size="10.65" text-anchor="middle">12Z</text>
<text x="666.60" y="669.0" font-size="10.65" text-anchor="middle">09Apr</text>
<text x="717.90" y="656.7" font-size="10.65" text-anchor="middle">12Z</text>
<text x="717.90" y="669.0" font-size="10.65" text-anchor="middle">10Apr</text>
<text x="769.20" y="656.7" font-size="10.65" text-anchor="middle">12Z</text>
<text x="769.20" y="669.0" font-size="10.65" text-anchor="middle">11Apr</text>
<text x="820.50" y="656.7" font-size="10.65" text-anchor="middle">12Z</text>
<text x="820.50" y="669.0" font-size="10.65" text-anchor="middle">12Apr</text>
</svg>
</body></html>
